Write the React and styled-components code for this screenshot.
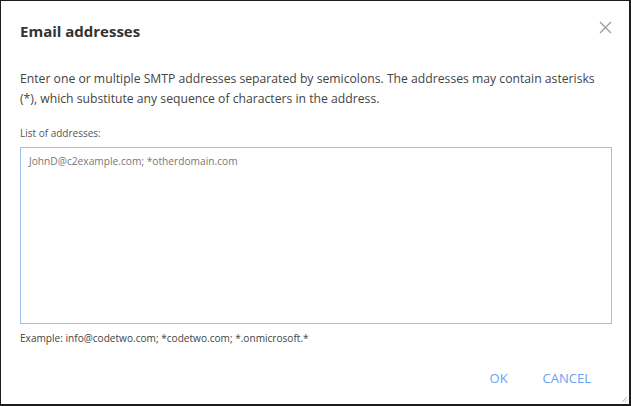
import React from "react";
import styled, { createGlobalStyle } from "styled-components";

const GlobalStyle = createGlobalStyle`
  html, body {
    margin: 0;
    padding: 0;
    background: #ffffff;
  }
  body {
    font-family: "Open Sans", "Noto Sans", sans-serif;
    color: #444;
  }
`;

const Frame = styled.div`
  position: relative;
  box-sizing: border-box;
  width: 631px;
  height: 406px;
  border-style: solid;
  border-color: #1c1c1c;
  border-width: 1px 2px 2px 1px;
  background: #fff;
  display: flex;
  flex-direction: column;
  padding: 0 18px 0 19px;
`;

const Header = styled.div`
  display: flex;
  align-items: center;
  justify-content: space-between;
  height: 60px;
`;

const Title = styled.h1`
  margin: 0;
  font-size: 15px;
  font-weight: 700;
  color: #333;
`;

const CloseButton = styled.button`
  border: 0;
  background: none;
  padding: 0;
  width: 13px;
  height: 13px;
  margin-right: -1px;
  margin-top: -7px;
  display: flex;
  align-items: center;
  justify-content: center;
  cursor: pointer;
`;

const Description = styled.p`
  margin: 8px 0 0;
  font-size: 12.2px;
  line-height: 20px;
  color: #444;
  width: 585px;
`;

const Label = styled.label`
  display: block;
  margin-top: 17px;
  font-size: 10px;
  line-height: 14px;
  color: #555;
`;

const AddressBox = styled.textarea`
  display: block;
  box-sizing: border-box;
  width: 592px;
  height: 177px;
  margin-top: 7px;
  padding: 6px 8px;
  border: 1px solid #99c2f2;
  border-radius: 0;
  resize: none;
  outline: none;
  font-family: inherit;
  font-size: 10.2px;
  line-height: 15px;
  color: #777;
  &::placeholder {
    color: #777;
  }
`;

const Hint = styled.div`
  margin-top: 7px;
  font-size: 10.1px;
  line-height: 14px;
  color: #444;
`;

const Footer = styled.div`
  display: flex;
  justify-content: flex-end;
  gap: 35px;
  margin-top: 24px;
  padding-right: 20px;
`;

const TextButton = styled.button`
  border: 0;
  background: none;
  padding: 0;
  font-family: inherit;
  font-size: 13px;
  line-height: 18px;
  color: #6aa1ef;
  cursor: pointer;
`;

const Grip = styled.svg`
  position: absolute;
  right: 1px;
  bottom: 1px;
`;

export default function App() {
  return (
    <>
      <GlobalStyle />
      <Frame>
        <Header>
          <Title>Email addresses</Title>
          <CloseButton aria-label="Close">
            <svg width="13" height="13" viewBox="0 0 13 13">
              <path d="M1 1 L12 12 M12 1 L1 12" stroke="#9a9a9a" strokeWidth="1.3" fill="none" />
            </svg>
          </CloseButton>
        </Header>
        <Description>
          Enter one or multiple SMTP addresses separated by semicolons. The addresses may contain asterisks
          (*), which substitute any sequence of characters in the address.
        </Description>
        <Label htmlFor="addresses">List of addresses:</Label>
        <AddressBox id="addresses" placeholder="JohnD@c2example.com; *otherdomain.com" />
        <Hint>Example: info@codetwo.com; *codetwo.com; *.onmicrosoft.*</Hint>
        <Footer>
          <TextButton>OK</TextButton>
          <TextButton>CANCEL</TextButton>
        </Footer>
        <Grip width="7" height="7" viewBox="0 0 7 7">
          <path d="M6 1 L1 6 M6 3.5 L3.5 6" stroke="#a8a8a8" strokeWidth="0.8" />
        </Grip>
      </Frame>
    </>
  );
}
